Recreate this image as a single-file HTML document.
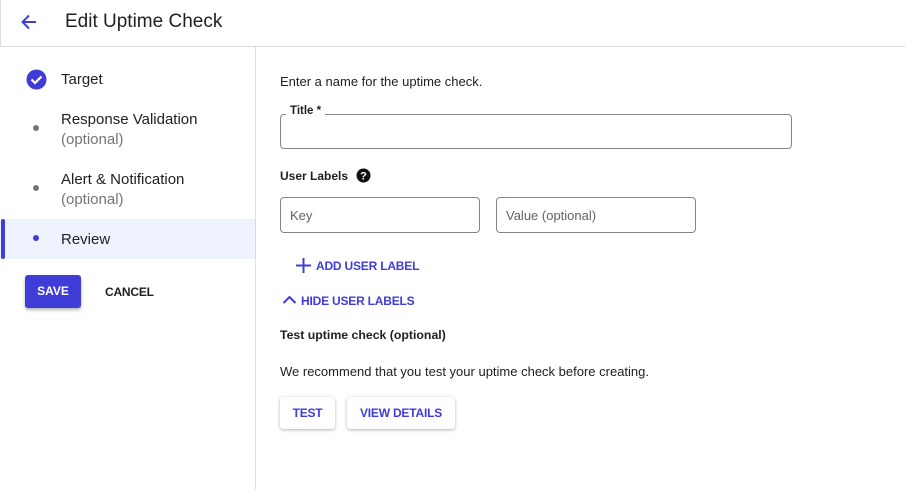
<!DOCTYPE html>
<html><head><style>
*{box-sizing:border-box;margin:0;padding:0}
body{width:905px;height:489px;background:#fff;font-family:"Liberation Sans",sans-serif;color:#202124;position:relative;overflow:hidden}
.a{position:absolute}
.hdr{left:0;top:0;width:905px;height:47px;border-bottom:1px solid #dadce0;border-left:1px solid #dadce0}
.side{left:255px;top:47px;width:1px;height:442px;background:#dadce0}
.t{font-size:15px}
.sub{font-size:15px;color:#757575}
.dot{width:6px;height:6px;border-radius:3px;background:#757575}
.box{border:1px solid #80868b;border-radius:4px}
.btn{font-size:12px;font-weight:bold;color:#3f3cd8;letter-spacing:-0.2px}
.rb{background:#fff;border-radius:3px;box-shadow:0 1px 3px rgba(0,0,0,.3);height:32px;text-align:center;line-height:32px}
</style></head><body>
<div class="a hdr"></div>
<svg class="a" style="left:19px;top:12px" width="20" height="20" viewBox="0 0 20 20"><path d="M17 10H4M10 3.5L3.5 10 10 16.5" stroke="#3f3cd8" stroke-width="2" fill="none"/></svg>
<div class="a" style="left:65px;top:11px;font-size:19px">Edit Uptime Check</div>
<div class="a side"></div>
<svg class="a" style="left:26px;top:69px" width="21" height="21" viewBox="0 0 21 21"><circle cx="10.5" cy="10.5" r="10" fill="#3f3cd8"/><path d="M5.5 10.5l3.5 3.5 6.5-6.5" stroke="#fff" stroke-width="2.2" fill="none"/></svg>
<div class="a t" style="left:61px;top:71px">Target</div>
<div class="a dot" style="left:33px;top:125px"></div>
<div class="a t" style="left:61px;top:111px">Response Validation</div>
<div class="a sub" style="left:61px;top:131px">(optional)</div>
<div class="a dot" style="left:33px;top:185px"></div>
<div class="a t" style="left:61px;top:171px">Alert &amp; Notification</div>
<div class="a sub" style="left:61px;top:191px">(optional)</div>
<div class="a" style="left:0;top:219px;width:255px;height:40px;background:#eef3fd"></div>
<div class="a" style="left:1px;top:219px;width:4px;height:40px;background:#3f3cd8;border-radius:2px"></div>
<div class="a dot" style="left:33px;top:235px;background:#3f3cd8"></div>
<div class="a t" style="left:61px;top:231px">Review</div>
<div class="a" style="left:25px;top:275px;width:56px;height:33px;background:#3f3cd8;border-radius:3px;box-shadow:0 2px 3px rgba(0,0,0,.3);color:#fff;font-size:12px;font-weight:bold;text-align:center;line-height:33px">SAVE</div>
<div class="a" style="left:105px;top:285px;font-size:12px;font-weight:bold;letter-spacing:-0.2px">CANCEL</div>

<div class="a" style="left:280px;top:74px;font-size:13px">Enter a name for the uptime check.</div>
<div class="a box" style="left:280px;top:114px;width:512px;height:35px"></div>
<div class="a" style="left:286px;top:105px;background:#fff;padding:0 4px;font-size:11.5px;font-weight:bold">Title *</div>
<div class="a" style="left:280px;top:169px;font-size:12px;font-weight:bold">User Labels</div>
<svg class="a" style="left:356px;top:168px" width="15" height="15" viewBox="0 0 15 15"><circle cx="7.5" cy="7.5" r="7" fill="#111"/><text x="7.5" y="11.5" text-anchor="middle" font-size="11" font-weight="bold" fill="#fff" font-family="Liberation Sans">?</text></svg>
<div class="a box" style="left:280px;top:197px;width:200px;height:36px"></div>
<div class="a" style="left:290px;top:208px;font-size:13px;color:#5f6368">Key</div>
<div class="a box" style="left:496px;top:197px;width:200px;height:36px"></div>
<div class="a" style="left:506px;top:208px;font-size:13px;color:#5f6368">Value (optional)</div>
<svg class="a" style="left:296px;top:258px" width="15" height="15"><path d="M7.5 0v15M0 7.5h15" stroke="#3f3cd8" stroke-width="2"/></svg>
<div class="a btn" style="left:316px;top:259px">ADD USER LABEL</div>
<svg class="a" style="left:282px;top:295px" width="15" height="10"><path d="M1.5 8L7.5 2l6 6" stroke="#3f3cd8" stroke-width="2" fill="none"/></svg>
<div class="a btn" style="left:301px;top:294px">HIDE USER LABELS</div>
<div class="a" style="left:280px;top:328px;font-size:12.3px;font-weight:bold">Test uptime check (optional)</div>
<div class="a" style="left:280px;top:364px;font-size:13px">We recommend that you test your uptime check before creating.</div>
<div class="a rb btn" style="left:280px;top:397px;width:55px">TEST</div>
<div class="a rb btn" style="left:347px;top:397px;width:108px">VIEW DETAILS</div>
</body></html>
